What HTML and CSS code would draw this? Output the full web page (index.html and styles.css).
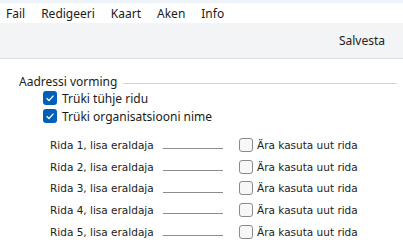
FILE: index.html
```html
<html>

<head>
    <meta charset="utf-8">
    <link rel="stylesheet" href="styles.css">
</head>

<body>
    <!-- menu -->
    <div class="menubar">
        <span class="menu-item">Fail</span>
        <span class="menu-item">Redigeeri</span>
        <span class="menu-item">Kaart</span>
        <span class="menu-item">Aken</span>
        <span class="menu-item">Info</span>
    </div>

    <!-- toolbar -->
    <div class="toolbar">
        <span class="tool-btn">Salvesta</span>
    </div>

    <!-- content -->
    <div class="content">
        <div class="group-title">
            <span>Aadressi vorming</span>
            <div class="group-line"></div>
        </div>

        <div class="opts">
            <label class="opt"><span class="cb checked"><svg viewBox="0 0 14 14"><path d="M3.6 7.2 L6 9.5 L10.5 4.6" /></svg></span>Trüki tühje ridu</label>
            <label class="opt"><span class="cb checked"><svg viewBox="0 0 14 14"><path d="M3.6 7.2 L6 9.5 L10.5 4.6" /></svg></span>Trüki organisatsiooni nime</label>
        </div>

        <div class="rows">
            <div class="row"><span class="row-label">Rida 1, lisa eraldaja</span><span class="sep-input"></span><span class="cb"></span><span class="row-opt">Ära kasuta uut rida</span></div>
            <div class="row"><span class="row-label">Rida 2, lisa eraldaja</span><span class="sep-input"></span><span class="cb"></span><span class="row-opt">Ära kasuta uut rida</span></div>
            <div class="row"><span class="row-label">Rida 3, lisa eraldaja</span><span class="sep-input"></span><span class="cb"></span><span class="row-opt">Ära kasuta uut rida</span></div>
            <div class="row"><span class="row-label">Rida 4, lisa eraldaja</span><span class="sep-input"></span><span class="cb"></span><span class="row-opt">Ära kasuta uut rida</span></div>
            <div class="row"><span class="row-label">Rida 5, lisa eraldaja</span><span class="sep-input"></span><span class="cb"></span><span class="row-opt">Ära kasuta uut rida</span></div>
        </div>
    </div>
</body>

</html>
```

FILE: styles.css
```css
body {
    margin: 0;
    background: white;
    font-family: "Noto Sans", sans-serif;
    font-size: 12px;
    color: #1a1a1a;
}

/* menu bar */
.menubar {
    display: flex;
    height: 20px;
    align-items: center;
    border-top: 3px solid #eef3f9;
    padding-left: 6px;
    gap: 16px;
}

/* tool bar */
.toolbar {
    display: flex;
    justify-content: flex-end;
    align-items: center;
    height: 35px;
    background-color: #f3f4f6;
    border-bottom: 1px solid #dedfe1;
    padding-right: 18px;
}

.tool-btn {
    color: #222;
}

/* content */
.content {
    padding: 14px 6px 0 19px;
}

.group-title {
    display: flex;
    align-items: center;
    gap: 6px;
    height: 16px;
    color: #222;
}

.group-line {
    flex: 1;
    height: 1px;
    margin-top: 5px;
    background-color: #d5d5d5;
}

.opts {
    display: flex;
    flex-direction: column;
    padding-left: 24px;
    margin-top: 0;
}

.opt {
    display: flex;
    align-items: center;
    gap: 5px;
    height: 18px;
}

.cb {
    box-sizing: border-box;
    display: inline-block;
    width: 14px;
    height: 14px;
    border: 1px solid #8a8a8a;
    border-radius: 3px;
    background-color: #f7f7f7;
    flex-shrink: 0;
}

.cb.checked {
    border: none;
    background-color: #005fb8;
}

.cb svg {
    display: block;
    width: 14px;
    height: 14px;
    fill: none;
    stroke: white;
    stroke-width: 1.3;
}

/* separator rows */
.rows {
    display: flex;
    flex-direction: column;
    margin-top: 9px;
    padding-left: 31px;
    font-family: "DejaVu Sans", sans-serif;
    font-size: 10.5px;
    color: #222;
}

.row {
    display: flex;
    align-items: center;
    height: 21.7px;
}

.row-label {
    width: 113px;
}

.sep-input {
    width: 60px;
    height: 8px;
    border-bottom: 1px solid #8c8c8c;
    margin-right: 16px;
}

.row .cb {
    margin-right: 4px;
}
```
